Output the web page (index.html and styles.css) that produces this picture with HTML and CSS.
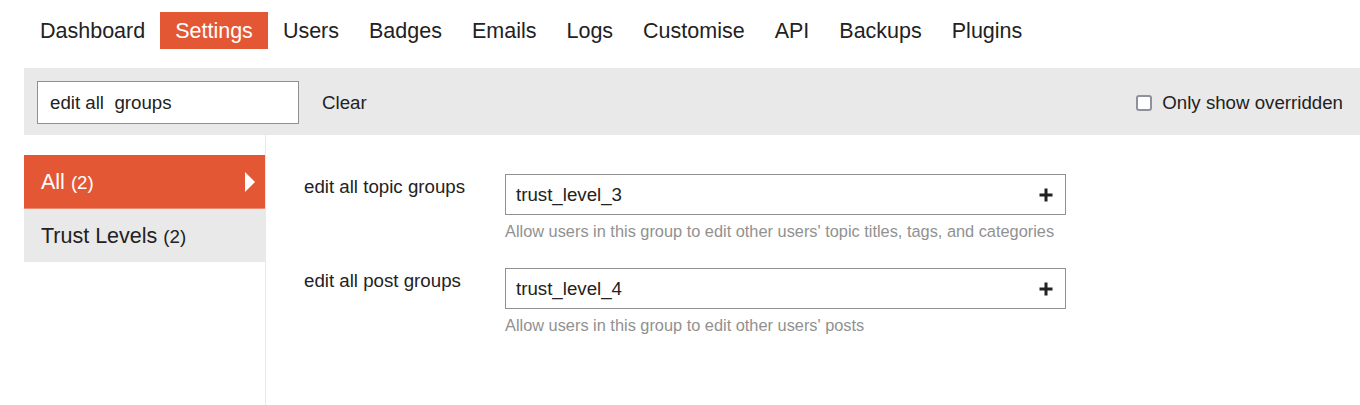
FILE: index.html
```html
<!DOCTYPE html>
<html lang="en">
<head>
<meta charset="utf-8">
<title>Admin Settings</title>
<link rel="stylesheet" href="styles.css">
</head>
<body>
<div class="page">
  <nav class="admin-nav">
    <a class="nav-item">Dashboard</a>
    <a class="nav-item active">Settings</a>
    <a class="nav-item">Users</a>
    <a class="nav-item">Badges</a>
    <a class="nav-item">Emails</a>
    <a class="nav-item">Logs</a>
    <a class="nav-item">Customise</a>
    <a class="nav-item">API</a>
    <a class="nav-item">Backups</a>
    <a class="nav-item">Plugins</a>
  </nav>
  <div class="filter-bar">
    <div class="search-box">edit all&nbsp; groups</div>
    <button class="clear-btn">Clear</button>
    <label class="overridden">
      <span class="checkbox"></span>
      <span>Only show overridden</span>
    </label>
  </div>
  <div class="main">
    <aside class="sidebar">
      <div class="side-item active">
        <span class="side-label">All <span class="count">(2)</span></span>
        <span class="arrow"></span>
      </div>
      <div class="side-item">
        <span class="side-label">Trust Levels <span class="count">(2)</span></span>
      </div>
    </aside>
    <section class="content">
      <div class="setting">
        <div class="setting-label">edit all topic groups</div>
        <div class="setting-value">
          <div class="group-input">
            <span>trust_level_3</span>
            <svg class="plus" width="16" height="16" viewBox="0 0 16 16"><path d="M8 1.5v13M1.5 8h13" stroke="#222" stroke-width="3" fill="none"/></svg>
          </div>
          <div class="desc">Allow users in this group to edit other users' topic titles, tags, and categories</div>
        </div>
      </div>
      <div class="setting">
        <div class="setting-label">edit all post groups</div>
        <div class="setting-value">
          <div class="group-input">
            <span>trust_level_4</span>
            <svg class="plus" width="16" height="16" viewBox="0 0 16 16"><path d="M8 1.5v13M1.5 8h13" stroke="#222" stroke-width="3" fill="none"/></svg>
          </div>
          <div class="desc">Allow users in this group to edit other users' posts</div>
        </div>
      </div>
    </section>
  </div>
</div>
</body>
</html>
```

FILE: styles.css
```css
* { box-sizing: border-box; }
html, body { margin: 0; padding: 0; background: #fff; }
body {
  font-family: "Liberation Sans", Arial, sans-serif;
  color: #222;
  font-size: 18.7px;
  overflow: hidden;
}
.page {
  height: 100vh;
  display: flex;
  flex-direction: column;
  padding-left: 24px;
}
.admin-nav {
  display: flex;
  padding-top: 12px;
  padding-left: 1px;
  height: 68px;
}
.nav-item {
  font-size: 21.5px;
  line-height: 25px;
  padding: 7px 15px 5px;
  height: 37px;
  color: #222;
}
.nav-item.active {
  background: #e45735;
  color: #fff;
}
.filter-bar {
  background: #e9e9e9;
  height: 67px;
  display: flex;
  align-items: center;
  padding: 2px 17px 0 13px;
}
.search-box {
  width: 262px;
  height: 43px;
  background: #fff;
  border: 1px solid #919191;
  padding: 0 12px;
  line-height: 41px;
  white-space: pre;
}
.clear-btn {
  font: inherit;
  color: #222;
  background: none;
  border: none;
  padding: 0;
  margin-left: 23px;
}
.overridden {
  margin-left: auto;
  display: flex;
  align-items: center;
  gap: 10px;
}
.checkbox {
  width: 16px;
  height: 16px;
  border: 2px solid #8f8f9d;
  border-radius: 3px;
  background: #fff;
}
.main {
  flex: 1;
  display: flex;
}
.sidebar {
  width: 242px;
  padding-top: 20px;
  border-right: 1px solid #e9e9e9;
}
.side-item {
  height: 53px;
  display: flex;
  align-items: center;
  padding: 2px 10px 0 17px;
  background: #e9e9e9;
  font-size: 21.5px;
}
.side-item.active {
  height: 54px;
  background: #e45735;
  color: #fff;
  border-bottom: 1px solid #ec8a73;
}
.count { font-size: 18.7px; }
.arrow {
  margin-left: auto;
  margin-top: -2px;
  width: 0;
  height: 0;
  border-left: 10px solid #fff;
  border-top: 10px solid transparent;
  border-bottom: 10px solid transparent;
}
.content {
  flex: 1;
  padding: 39px 0 0 38px;
}
.setting {
  display: flex;
  margin-bottom: 27px;
}
.setting-label {
  width: 201px;
  line-height: 22px;
  padding-top: 2px;
}
.setting-value { width: 561px; }
.group-input {
  height: 41px;
  border: 1px solid #919191;
  display: flex;
  align-items: center;
  justify-content: space-between;
  padding: 0 11px 0 10px;
}
.plus { display: block; }
.desc {
  margin-top: 6px;
  font-size: 16.35px;
  line-height: 20px;
  color: #919191;
}
```
